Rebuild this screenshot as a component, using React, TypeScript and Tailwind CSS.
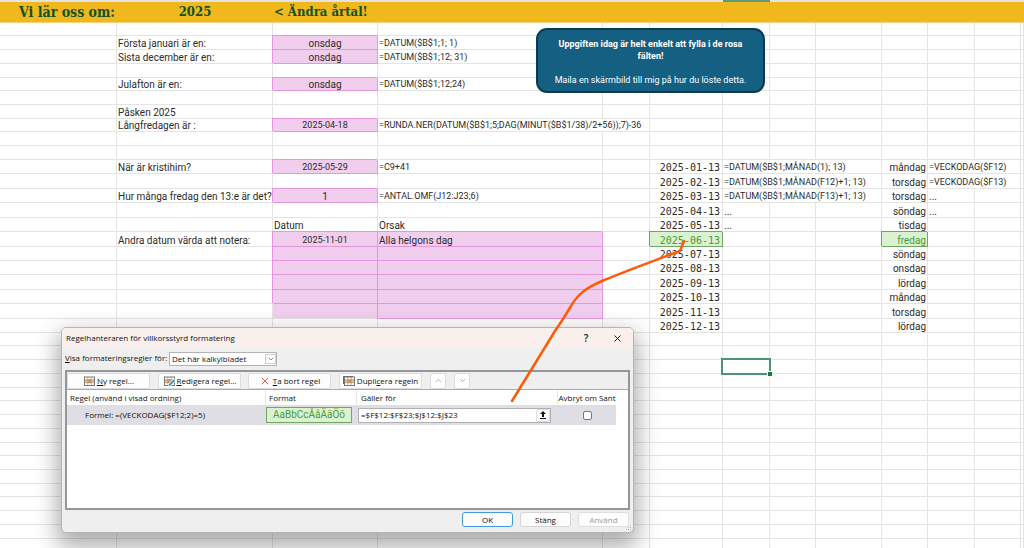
import { useState } from 'react';
import type { ReactNode } from 'react';
import { ChevronDown, ChevronUp, X } from 'lucide-react';
import { clsx } from 'clsx';

type Tone = 'pink' | 'pinkLast' | 'green';

interface Cell {
  text?: string;
  span?: number;
  align?: 'center' | 'right';
  tone?: Tone;
  mono?: boolean;
  small?: boolean;
  selected?: boolean;
}

interface Row {
  height: string;
  cells?: Record<number, Cell>;
}

const COLUMNS = [
  'w-[117px]',
  'w-[156px]',
  'w-[105px]',
  'w-[225px]',
  'w-[47px]',
  'w-[73px]',
  'w-[47px]',
  'w-[46px]',
  'w-[66px]',
  'w-[46px]',
  'w-[47px]',
  'w-[46px]',
  '',
];

const S = 'h-[13px]';
const M = 'h-[14px]';
const L = 'h-[15px]';

const answer = (text = ''): Cell => ({ text, align: 'center', tone: 'pink' });
const dateAnswer = (text: string): Cell => ({ text, align: 'center', tone: 'pink', small: true });
const formula = (text: string, span = 1): Cell => ({ text, span, small: true });
const date = (text: string, tone?: Tone): Cell => ({ text, align: 'right', mono: true, tone });
const day = (text: string, tone?: Tone): Cell => ({ text, align: 'right', tone });

// Cells are keyed by column index, A = 0
const ROWS: Row[] = [
  { height: S },
  { height: M, cells: { 1: { text: 'Första januari är en:' }, 2: answer('onsdag'), 3: formula('=DATUM($B$1;1; 1)') } },
  { height: M, cells: { 1: { text: 'Sista december är en:' }, 2: answer('onsdag'), 3: formula('=DATUM($B$1;12; 31)') } },
  { height: M },
  { height: S, cells: { 1: { text: 'Julafton är en:' }, 2: answer('onsdag'), 3: formula('=DATUM($B$1;12;24)') } },
  { height: M },
  { height: M, cells: { 1: { text: 'Påsken 2025' } } },
  {
    height: S,
    cells: {
      1: { text: 'Långfredagen är :' },
      2: dateAnswer('2025-04-18'),
      3: formula('=RUNDA.NER(DATUM($B$1;5;DAG(MINUT($B$1/38)/2+56));7)-36', 2),
    },
  },
  { height: M },
  { height: M },
  {
    height: M,
    cells: {
      1: { text: 'När är kristihim?' },
      2: dateAnswer('2025-05-29'),
      3: formula('=C9+41'),
      5: date('2025-01-13'),
      6: formula('=DATUM($B$1;MÅNAD(1); 13)', 3),
      9: day('måndag'),
      10: formula('=VECKODAG($F12)', 2),
    },
  },
  {
    height: L,
    cells: {
      5: date('2025-02-13'),
      6: formula('=DATUM($B$1;MÅNAD(F12)+1; 13)', 3),
      9: day('torsdag'),
      10: formula('=VECKODAG($F13)', 2),
    },
  },
  {
    height: M,
    cells: {
      1: { text: 'Hur många fredag den 13:e är det?' },
      2: answer('1'),
      3: formula('=ANTAL.OMF(J12:J23;6)'),
      5: date('2025-03-13'),
      6: formula('=DATUM($B$1;MÅNAD(F13)+1; 13)', 3),
      9: day('torsdag'),
      10: { text: '...' },
    },
  },
  { height: L, cells: { 5: date('2025-04-13'), 6: { text: '...' }, 9: day('söndag'), 10: { text: '...' } } },
  {
    height: M,
    cells: { 2: { text: 'Datum' }, 3: { text: 'Orsak' }, 5: date('2025-05-13'), 6: { text: '...' }, 9: day('tisdag') },
  },
  {
    height: L,
    cells: {
      1: { text: 'Andra datum värda att notera:' },
      2: dateAnswer('2025-11-01'),
      3: { text: 'Alla helgons dag', tone: 'pink' },
      5: date('2025-06-13', 'green'),
      9: day('fredag', 'green'),
    },
  },
  { height: M, cells: { 2: answer(), 3: answer(), 5: date('2025-07-13'), 9: day('söndag') } },
  { height: M, cells: { 2: answer(), 3: answer(), 5: date('2025-08-13'), 9: day('onsdag') } },
  { height: L, cells: { 2: answer(), 3: answer(), 5: date('2025-09-13'), 9: day('lördag') } },
  { height: M, cells: { 2: answer(), 3: answer(), 5: date('2025-10-13'), 9: day('måndag') } },
  { height: L, cells: { 2: { tone: 'pinkLast' }, 3: answer(), 5: date('2025-11-13'), 9: day('torsdag') } },
  { height: M, cells: { 5: date('2025-12-13'), 9: day('lördag') } },
  { height: S },
  { height: M },
  { height: M, cells: { 6: { selected: true } } },
  { height: M },
  { height: S },
  { height: M },
  { height: M },
  { height: M },
  { height: S },
  { height: M },
  { height: M },
  { height: S },
  { height: M },
  { height: M },
  { height: M },
  { height: M },
];

function SheetRow({ row }: { row: Row }) {
  const tds: ReactNode[] = [];
  for (let col = 0; col < COLUMNS.length; ) {
    const cell = row.cells?.[col] ?? {};
    tds.push(
      <td
        key={col}
        colSpan={cell.span}
        className={clsx(
          'border-r border-b pt-px pb-0 pl-px align-bottom whitespace-nowrap',
          cell.align === 'center' && 'text-center',
          cell.align === 'right' && 'text-right',
          cell.mono ? 'pr-[2px] font-["DejaVu_Sans_Mono",monospace]' : 'pr-px',
          cell.small && 'text-[9px]',
          cell.selected && 'relative',
          !cell.tone && 'border-[#e4e4e4]',
          cell.tone === 'pink' && 'border-[#e597dd] bg-[#f2ceee] shadow-[-1px_-1px_0_0_#e597dd]',
          cell.tone === 'pinkLast' && 'border-[#e597dd] border-b-[#e4e4e4] bg-[#f2ceee]',
          cell.tone === 'green' && 'border-[#6fa860] bg-[#daf2d0] text-[#4c9a3c] shadow-[-1px_-1px_0_0_#6fa860]',
        )}
      >
        {cell.text}
        {cell.selected && (
          <span className="absolute -inset-[2px] border-2 border-[#4f9470]">
            <span className="absolute -right-[3px] -bottom-[3px] size-1 bg-[#217346] outline outline-white" />
          </span>
        )}
      </td>,
    );
    col += cell.span ?? 1;
  }
  return <tr className={row.height}>{tds}</tr>;
}

function Sheet() {
  return (
    <table className="w-full table-fixed border-separate border-spacing-0 text-[10px] leading-[11px] text-[#2b2b2b]">
      <colgroup>
        {COLUMNS.map((width, i) => (
          <col key={i} className={width} />
        ))}
      </colgroup>
      <thead>
        <tr className="h-[2px] bg-[#e3e3e3]">
          {COLUMNS.map((_, i) => (
            <td key={i} className={clsx('h-[2px] p-0', i === 6 && 'bg-[#5c9c78]')} />
          ))}
        </tr>
        <tr className='h-[21px] bg-[#f0b81c] font-["DejaVu_Serif_Condensed","DejaVu_Serif",serif] text-[13px] leading-[20px] whitespace-nowrap text-[#0f5226]'>
          <th className="border-b border-[#f3d27a] p-0 pr-[2px] text-right text-[14px] font-bold">Vi lär oss om:</th>
          <th className="border-b border-[#f3d27a] p-0 text-center font-bold">2025</th>
          <th colSpan={11} className="border-b border-[#f3d27a] p-0 pl-px text-left font-bold">
            &lt; Ändra årtal!
          </th>
        </tr>
      </thead>
      <tbody>
        {ROWS.map((row, i) => (
          <SheetRow key={i} row={row} />
        ))}
      </tbody>
    </table>
  );
}

function RuleIcon({ variant }: { variant: 'new' | 'edit' | 'copy' }) {
  return (
    <svg viewBox="0 0 12 10" className="h-[10px] w-[12px] shrink-0" fill="none">
      {variant === 'copy' && <path d="M0.5 8V0.5H10" stroke="#666" />}
      <rect x="1.5" y="1" width="10" height="8.5" fill="#fff" stroke="#777" />
      <rect x="2" y="3.7" width="9" height="3" fill="#f9bd72" />
      <rect x="5" y="3.7" width="3" height="3" fill="#f0922b" />
      <path d="M4.8 1v8.5M8.2 1v8.5M1.5 3.7h10M1.5 6.7h10" stroke="#888" strokeWidth="0.6" />
      {variant === 'edit' && (
        <>
          <path d="M5.5 10 12 3.5" stroke="#fff" strokeWidth="3.5" />
          <path d="M6 9.5 11.5 4" stroke="#3b93d4" strokeWidth="2" />
        </>
      )}
    </svg>
  );
}

function ToolButton({ icon, children, className }: { icon: ReactNode; children: ReactNode; className?: string }) {
  return (
    <button
      type="button"
      className={clsx(
        'flex h-4 items-center justify-center gap-[2px] rounded-[2px] border border-[#dcdcdc] bg-[#fdfdfd] whitespace-nowrap',
        className,
      )}
    >
      {icon}
      <span>{children}</span>
    </button>
  );
}

function RuleManager() {
  const [range, setRange] = useState('=$F$12:$F$23;$J$12:$J$23');
  const footerButton = 'h-[15px] w-[51px] rounded-[3px] border bg-[#fdfdfd]';

  return (
    <section
      aria-label="Regelhanteraren för villkorsstyrd formatering"
      className='absolute top-[327px] left-[61px] w-[573px] overflow-hidden rounded-[5px] border border-[#b5b5b5] bg-[#efefef] font-["Open_Sans","Noto_Sans",sans-serif] text-[8px] leading-[12px] text-[#111] shadow-[0_10px_22px_4px_rgba(0,0,0,0.32)]'
    >
      <header className="flex h-5 items-center bg-[#f9f0ee] pr-2 pl-1">
        <h2 className="flex-1">Regelhanteraren för villkorsstyrd formatering</h2>
        <button type="button" aria-label="Hjälp" className="w-4 text-[10px] font-semibold">
          ?
        </button>
        <button type="button" aria-label="Stäng fönstret" className="ml-[15px] flex w-4 justify-center">
          <X className="size-[11px]" strokeWidth={2} />
        </button>
      </header>

      <div className="flex h-[22px] items-center pl-[3px]">
        <label htmlFor="rule-scope" className="w-[104px] pb-[2px] whitespace-nowrap">
          <u>V</u>isa formateringsregler för:
        </label>
        <div className="relative">
          <select
            id="rule-scope"
            className="block h-[14px] w-[108px] appearance-none border border-[#b4b4b4] bg-white pl-[2px] leading-[12px]"
          >
            <option>Det här kalkylbladet</option>
          </select>
          <span className="pointer-events-none absolute top-[2px] right-[1px] flex h-[10px] w-[11px] items-center justify-center border border-[#cfcfcf] bg-white">
            <ChevronDown className="size-2 text-[#555]" />
          </span>
        </div>
      </div>

      <div className="mx-[3px] h-[140px] border-2 border-[#94969c] bg-white">
        <div className="flex h-[18px] items-center border-b border-[#a9abb0] bg-[#efefef]">
          <ToolButton className="w-[83px]" icon={<RuleIcon variant="new" />}>
            <u>N</u>y regel...
          </ToolButton>
          <ToolButton className="ml-2 w-[83px]" icon={<RuleIcon variant="edit" />}>
            <u>R</u>edigera regel...
          </ToolButton>
          <ToolButton className="ml-[7px] w-[83px]" icon={<X className="size-3 text-[#ee5a52]" strokeWidth={2} />}>
            <u>T</u>a bort regel
          </ToolButton>
          <ToolButton className="ml-2 w-[83px]" icon={<RuleIcon variant="copy" />}>
            Dupli<u>c</u>era regeln
          </ToolButton>
          <button
            type="button"
            aria-label="Flytta upp"
            className="ml-2 flex size-4 items-center justify-center rounded-[2px] border border-[#dcdcdc] bg-[#fdfdfd]"
          >
            <ChevronUp className="size-[9px] text-[#9a9a9a]" />
          </button>
          <button
            type="button"
            aria-label="Flytta ned"
            className="ml-2 flex size-4 items-center justify-center rounded-[2px] border border-[#dcdcdc] bg-[#fdfdfd]"
          >
            <ChevronDown className="size-[9px] text-[#9a9a9a]" />
          </button>
        </div>

        <table className="w-[549px] table-fixed border-separate border-spacing-0 text-left">
          <thead>
            <tr className="h-[15px] whitespace-nowrap">
              <th className="w-[199px] border-r border-[#e8e8e8] p-0 pl-[3px] font-normal">Regel (använd i visad ordning)</th>
              <th className="w-[91px] border-r border-[#e8e8e8] p-0 pl-[3px] font-normal">Format</th>
              <th className="w-[201px] border-r border-[#e8e8e8] p-0 pl-[4px] font-normal">Gäller för</th>
              <th className="p-0 text-center font-normal">Avbryt om Sant</th>
            </tr>
          </thead>
          <tbody>
            <tr className="h-5 bg-[#dfdee4]">
              <td className="p-0 pl-[18px]">Formel: =(VECKODAG($F12;2)=5)</td>
              <td className="p-0">
                <div className='h-4 w-[86px] border border-[#6fa860] bg-[#daf2d0] text-center font-["Roboto",sans-serif] text-[10px] leading-[14px] text-[#4c9a3c]'>
                  AaBbCcÅåÄäÖö
                </div>
              </td>
              <td className="p-0 pl-px">
                <div className="flex h-[15px] w-[193px] border border-[#b0b0b0] bg-white">
                  <input
                    aria-label="Gäller för"
                    value={range}
                    onChange={(e) => setRange(e.target.value)}
                    className="min-w-0 flex-1 pl-[2px] outline-none"
                  />
                  <button
                    type="button"
                    aria-label="Markera område"
                    className="flex w-[14px] items-center justify-center rounded-[2px] border border-[#dcdcdc] bg-[#fdfdfd]"
                  >
                    <svg viewBox="0 0 8 8" className="size-2">
                      <path d="M4 0 7 3H5v3H3V3H1zM1 7h6v1H1z" fill="#111" />
                    </svg>
                  </button>
                </div>
              </td>
              <td className="p-0">
                <input
                  type="checkbox"
                  aria-label="Avbryt om Sant"
                  className="mx-auto block size-[9px] appearance-none rounded-[2px] border border-[#777] bg-white"
                />
              </td>
            </tr>
          </tbody>
        </table>
      </div>

      <footer className="flex justify-end gap-[7px] pt-[2px] pr-1 pb-[5px]">
        <button type="button" className={clsx(footerButton, 'border-[#3f9be0]')}>
          OK
        </button>
        <button type="button" className={clsx(footerButton, 'border-[#d4d4d4]')}>
          Stäng
        </button>
        <button type="button" disabled className={clsx(footerButton, 'border-[#dedede] text-[#9b9b9b]')}>
          Använd
        </button>
      </footer>
      <svg viewBox="0 0 6 6" className="absolute right-px bottom-px size-[6px]" fill="#b9b9b9">
        <path d="M4 0h1v1H4zM2 2h1v1H2zM4 2h1v1H4zM0 4h1v1H0zM2 4h1v1H2zM4 4h1v1H4z" />
      </svg>
    </section>
  );
}

export default function App() {
  return (
    <main className='relative h-screen overflow-hidden bg-white font-["Roboto",sans-serif]'>
      <Sheet />

      {/* Task note */}
      <aside className="absolute top-[28px] left-[536px] w-[229px] rounded-[11px] border-2 border-[#0d3a50] bg-[#156082] px-4 pt-2 pb-[5px] text-center text-[9px] leading-[12px] text-white">
        <p className="font-bold">Uppgiften idag är helt enkelt att fylla i de rosa fälten!</p>
        <p className="mt-3 whitespace-nowrap">Maila en skärmbild till mig på hur du löste detta.</p>
      </aside>

      <RuleManager />

      {/* Pen stroke from the rule to the highlighted date */}
      <svg viewBox="0 0 184 168" className="pointer-events-none absolute top-[236px] left-[506px] h-[168px] w-[184px]" fill="none">
        <path
          d="M178 5 174 15C150 24 125 33 96 45C80 52 72 58 65 70C58 82 54 88 49 95L6 165"
          stroke="#ff5a0a"
          strokeWidth="2.5"
          strokeLinecap="round"
          strokeLinejoin="round"
        />
      </svg>
    </main>
  );
}
